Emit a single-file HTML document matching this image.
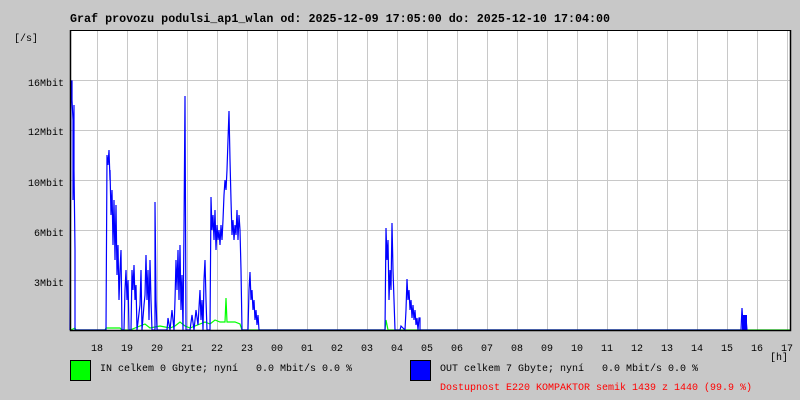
<!DOCTYPE html>
<html><head><meta charset="utf-8"><style>
html,body{margin:0;padding:0;background:#c8c8c8;}
svg{display:block;}
text{font-family:"Liberation Mono",monospace;white-space:pre;}
</style></head><body>
<svg width="800" height="400" xmlns="http://www.w3.org/2000/svg">
<rect width="800" height="400" fill="#c8c8c8"/>
<text x="70" y="22" font-size="11.7" font-weight="bold" fill="#000">Graf provozu podulsi_ap1_wlan od: 2025-12-09 17:05:00 do: 2025-12-10 17:04:00</text>
<rect x="70" y="30" width="720" height="300" fill="#fff"/>
<g stroke="#c8c8c8" stroke-width="1">
<path d="M97.5 30V330M127.5 30V330M157.5 30V330M187.5 30V330M217.5 30V330M247.5 30V330M277.5 30V330M307.5 30V330M337.5 30V330M367.5 30V330M397.5 30V330M427.5 30V330M457.5 30V330M487.5 30V330M517.5 30V330M547.5 30V330M577.5 30V330M607.5 30V330M637.5 30V330M667.5 30V330M697.5 30V330M727.5 30V330M757.5 30V330M787.5 30V330"/>
<path d="M70 80.5H790M70 130.5H790M70 180.5H790M70 230.5H790M70 280.5H790"/>
</g>
<g fill="none" stroke-width="1.2">
<polyline stroke="#0f0" points="71,330 75,328 76,330 105,330 106,328 120,328 122,330 130,330 135,328 140,326 145,324 150,328 160,326 170,328 175,326 180,322 185,326 190,328 195,326 200,324 205,322 210,324 215,320 220,322 225,322 226,298 227,322 235,322 240,324 242,330 385,330 386,320 388,330 790,330" />
<polyline stroke="#00f" points="70,330 71,81 72,81 72,100 73,120 73,200 74,105 74,170 75,250 75,330 106,330 107,155 108,165 109,150 110,180 110,170 111,215 112,190 113,245 114,200 115,260 116,205 117,275 118,245 119,300 120,270 121,250 122,330 124,330 125,290 126,270 127,300 128,280 129,330 131,330 132,270 133,290 134,265 135,300 136,285 137,330 140,305 141,270 142,330 144,305 145,295 146,255 147,300 148,270 149,320 150,260 151,300 152,330 155,330 155,202 156,300 157,330 167,330 168,318 170,330 172,310 174,330 175,300 176,260 177,290 178,250 179,300 180,245 181,310 182,275 183,330 184,230 185,96 186,330 190,330 192,315 194,330 196,310 198,325 200,290 201,320 202,300 203,330 204,280 205,260 206,300 207,330 210,330 211,197 212,230 213,215 214,240 215,210 216,250 217,225 218,240 219,230 220,245 221,225 222,240 223,220 224,195 225,180 226,190 227,170 228,140 229,111 230,160 231,200 232,235 233,220 234,240 235,225 236,235 237,210 238,240 239,215 240,230 241,270 242,330 248,330 249,290 250,272 251,300 252,290 253,310 254,300 255,320 256,310 257,325 258,315 259,330 385,330 386,228 387,260 388,240 389,300 390,270 391,290 392,223 393,270 394,300 395,330 400,330 401,326 405,330 406,310 407,279 408,300 409,290 410,310 411,300 412,318 413,305 414,320 415,310 416,325 417,318 418,330 419,318 420,318 420,330 741,330 742,308 743,325 744,318 745,322 746,318 747,330" />
</g>
<rect x="742" y="315" width="5" height="15" fill="#00f"/>
<path d="M70.5 30V330.5H790.5V30" fill="none" stroke="#000" stroke-width="1.5"/>
<path d="M70 30.5H790" fill="none" stroke="#000" stroke-width="1"/>
<g font-size="10" fill="#000" text-anchor="end">
<text x="38" y="41">[/s]</text>
<text x="64" y="86">16Mbit</text>
<text x="64" y="135">12Mbit</text>
<text x="64" y="186">10Mbit</text>
<text x="64" y="236">6Mbit</text>
<text x="64" y="286">3Mbit</text>
</g>
<g font-size="10" fill="#000" text-anchor="middle">
<text x="97" y="351">18</text><text x="127" y="351">19</text><text x="157" y="351">20</text><text x="187" y="351">21</text><text x="217" y="351">22</text><text x="247" y="351">23</text><text x="277" y="351">00</text><text x="307" y="351">01</text><text x="337" y="351">02</text><text x="367" y="351">03</text><text x="397" y="351">04</text><text x="427" y="351">05</text><text x="457" y="351">06</text><text x="487" y="351">07</text><text x="517" y="351">08</text><text x="547" y="351">09</text><text x="577" y="351">10</text><text x="607" y="351">11</text><text x="637" y="351">12</text><text x="667" y="351">13</text><text x="697" y="351">14</text><text x="727" y="351">15</text><text x="757" y="351">16</text><text x="787" y="351">17</text>
<text x="779" y="360">[h]</text>
</g>
<rect x="70.5" y="360.5" width="20" height="20" fill="#0f0" stroke="#000"/>
<rect x="410.5" y="360.5" width="20" height="20" fill="#00f" stroke="#000"/>
<g font-size="10">
<text x="100" y="371" fill="#000">IN celkem 0 Gbyte; nyní   0.0 Mbit/s 0.0 %</text>
<text x="440" y="371" fill="#000">OUT celkem 7 Gbyte; nyní   0.0 Mbit/s 0.0 %</text>
<text x="440" y="390" fill="#f00">Dostupnost E220 KOMPAKTOR semik 1439 z 1440 (99.9 %)</text>
</g>
</svg>
</body></html>
